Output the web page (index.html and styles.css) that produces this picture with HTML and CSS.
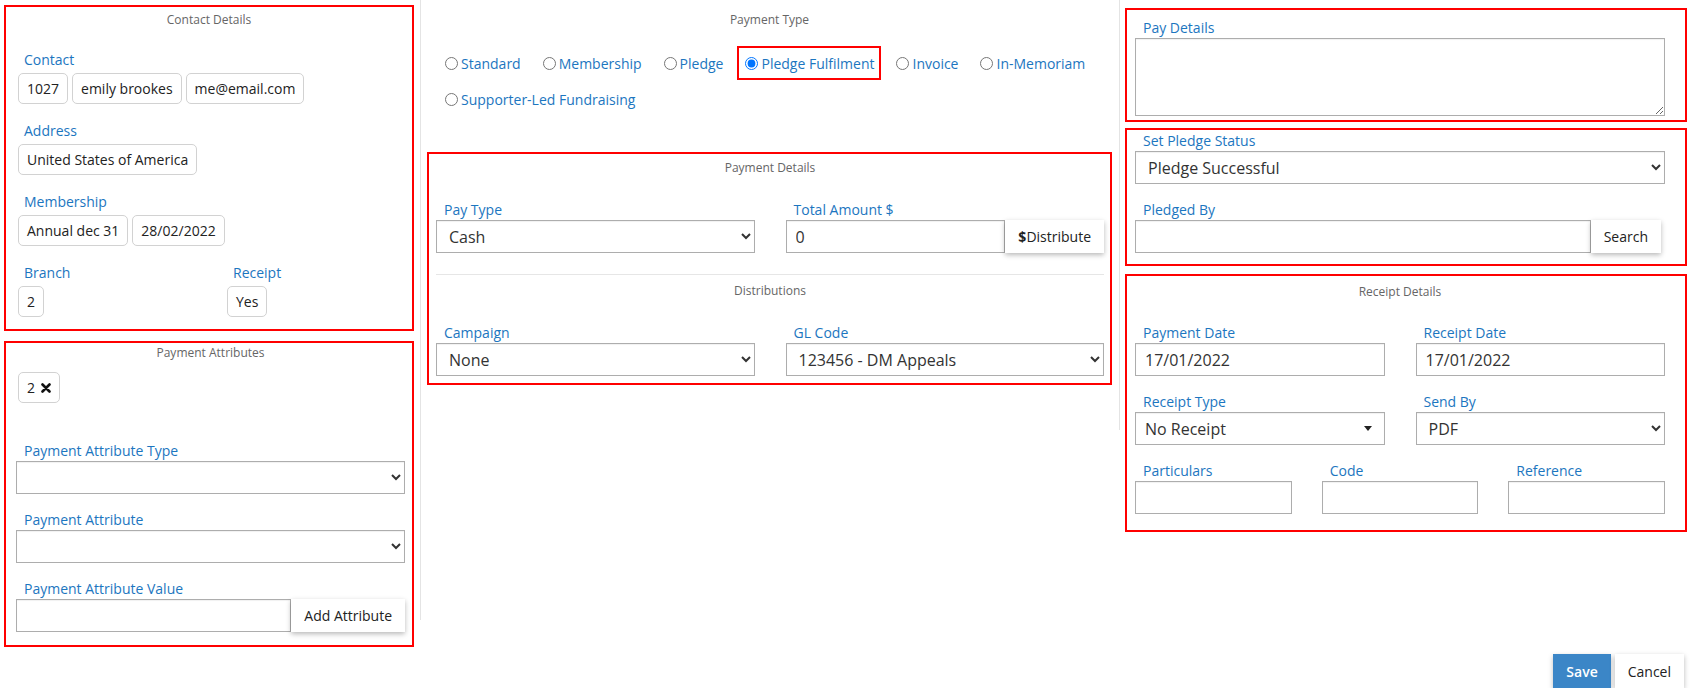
FILE: index.html
```html
<!DOCTYPE html>
<html lang="en">
<head>
  <meta charset="UTF-8">
  <meta name="viewport" content="width=device-width, initial-scale=1.0">
  <title>Payment</title>
  <link rel="stylesheet" href="styles.css">
</head>
<body>
  <div class="page">
    <div class="col col-left">
      <section class="box contact-box">
        <div class="box-title">Contact Details</div>
        <div class="field">
          <span class="lbl">Contact</span>
          <div class="chips">
            <span class="chip">1027</span>
            <span class="chip">emily brookes</span>
            <span class="chip">me@email.com</span>
          </div>
        </div>
        <div class="field">
          <span class="lbl">Address</span>
          <div class="chips">
            <span class="chip">United States of America</span>
          </div>
        </div>
        <div class="field">
          <span class="lbl">Membership</span>
          <div class="chips">
            <span class="chip">Annual dec 31</span>
            <span class="chip">28/02/2022</span>
          </div>
        </div>
        <div class="field field-pair">
          <div>
            <span class="lbl">Branch</span>
            <div class="chips"><span class="chip">2</span></div>
          </div>
          <div>
            <span class="lbl">Receipt</span>
            <div class="chips"><span class="chip">Yes</span></div>
          </div>
        </div>
      </section>

      <section class="box attr-box">
        <div class="box-title">Payment Attributes</div>
        <div class="chips tags">
          <span class="chip">2
            <svg class="remove" width="10" height="10" viewBox="0 0 10 10">
              <path d="M1.5 1.5 L8.5 8.5 M8.5 1.5 L1.5 8.5" stroke="#111" stroke-width="2.6" stroke-linecap="round"/>
            </svg>
          </span>
        </div>
        <div class="field">
          <span class="lbl">Payment Attribute Type</span>
          <select class="control"><option></option></select>
        </div>
        <div class="field">
          <span class="lbl">Payment Attribute</span>
          <select class="control"><option></option></select>
        </div>
        <div class="field">
          <span class="lbl">Payment Attribute Value</span>
          <div class="input-group">
            <input class="control" type="text">
            <button class="btn-raised">Add Attribute</button>
          </div>
        </div>
      </section>
    </div>

    <div class="col col-mid">
      <div class="box-title">Payment Type</div>
      <div class="radio-group">
        <label class="radio"><input type="radio" name="ptype">Standard</label>
        <label class="radio"><input type="radio" name="ptype">Membership</label>
        <label class="radio"><input type="radio" name="ptype">Pledge</label>
        <label class="radio selected"><input type="radio" name="ptype" checked>Pledge Fulfilment</label>
        <label class="radio"><input type="radio" name="ptype">Invoice</label>
        <label class="radio"><input type="radio" name="ptype">In-Memoriam</label>
        <label class="radio"><input type="radio" name="ptype">Supporter-Led Fundraising</label>
      </div>

      <section class="box details-box">
        <div class="box-title">Payment Details</div>
        <div class="grid-2">
          <div>
            <span class="lbl">Pay Type</span>
            <select class="control"><option>Cash</option></select>
          </div>
          <div>
            <span class="lbl">Total Amount $</span>
            <div class="input-group">
              <input class="control" type="text" value="0">
              <button class="btn-raised"><b>$</b>Distribute</button>
            </div>
          </div>
        </div>
        <hr>
        <div class="box-title">Distributions</div>
        <div class="grid-2">
          <div>
            <span class="lbl">Campaign</span>
            <select class="control"><option>None</option></select>
          </div>
          <div>
            <span class="lbl">GL Code</span>
            <select class="control"><option>123456 - DM Appeals</option></select>
          </div>
        </div>
      </section>
    </div>

    <div class="col col-right">
      <section class="box side-box paydetails-box">
        <span class="lbl">Pay Details</span>
        <textarea class="control notes"></textarea>
      </section>

      <section class="box side-box pledge-box">
        <span class="lbl">Set Pledge Status</span>
        <select class="control"><option>Pledge Successful</option></select>
        <div class="field">
          <span class="lbl">Pledged By</span>
          <div class="input-group pledged">
            <input class="control" type="text">
            <button class="btn-raised">Search</button>
          </div>
        </div>
      </section>

      <section class="box side-box receipt-box">
        <div class="box-title">Receipt Details</div>
        <div class="grid-2 first">
          <div>
            <span class="lbl">Payment Date</span>
            <input class="control" type="text" value="17/01/2022">
          </div>
          <div>
            <span class="lbl">Receipt Date</span>
            <input class="control" type="text" value="17/01/2022">
          </div>
        </div>
        <div class="grid-2 field">
          <div>
            <span class="lbl">Receipt Type</span>
            <button class="control picker">No Receipt<span class="caret"></span></button>
          </div>
          <div>
            <span class="lbl">Send By</span>
            <select class="control"><option>PDF</option></select>
          </div>
        </div>
        <div class="grid-3 field">
          <div>
            <span class="lbl">Particulars</span>
            <input class="control" type="text">
          </div>
          <div>
            <span class="lbl">Code</span>
            <input class="control" type="text">
          </div>
          <div>
            <span class="lbl">Reference</span>
            <input class="control" type="text">
          </div>
        </div>
      </section>
    </div>
  </div>

  <div class="actions">
    <button class="btn-save">Save</button>
    <button class="btn-raised btn-cancel">Cancel</button>
  </div>
</body>
</html>
```

FILE: styles.css
```css
* {
  margin: 0;
  padding: 0;
  box-sizing: border-box;
}

body {
  font-family: 'Open Sans', 'Noto Sans', sans-serif;
  font-size: 14px;
  color: #333;
  background: #fff;
}

.page {
  display: grid;
  grid-template-columns: 417px 698px 568px;
  align-items: start;
  padding-left: 4px;
}

/* columns */
.col-left {
  padding: 5px 7px 0 0;
  background: linear-gradient(#e4e4e4, #e4e4e4) right top / 1px 620px no-repeat;
}

.col-mid {
  padding: 12px 7px 0 6px;
}

.col-right {
  padding: 8px 0 0 6px;
  background: linear-gradient(#e4e4e4, #e4e4e4) left top / 1px 430px no-repeat;
}

/* boxes */
.box {
  border: 2px solid #ff0000;
}

.box-title {
  font-size: 12px;
  line-height: 16px;
  color: #666;
  text-align: center;
}

.lbl {
  display: block;
  font-size: 14px;
  line-height: 20px;
  color: #1c76c0;
  padding-left: 8px;
}

.chips {
  display: flex;
  gap: 4px;
}

.chip {
  display: inline-flex;
  align-items: center;
  height: 31px;
  padding: 0 8px;
  border: 1px solid #d2d2d2;
  border-radius: 5px;
  font-size: 14px;
  color: #222;
}

.chip .remove {
  margin-left: 6px;
}

.control {
  display: block;
  width: 100%;
  height: 33px;
  padding: 0 9px;
  font-family: inherit;
  font-size: 16px;
  color: #333;
  background: #fff;
  border: 1px solid #adadad;
  border-radius: 0;
  box-shadow: inset 0 1px 1px rgba(0, 0, 0, 0.06);
  outline: none;
}

select.control {
  padding-left: 8px;
}

.input-group {
  display: flex;
}

.input-group .control {
  flex: 1;
  min-width: 0;
}

.btn-raised {
  flex-shrink: 0;
  height: 33px;
  padding: 0 13px;
  font-family: inherit;
  font-size: 14px;
  color: #222;
  background: #fff;
  border: none;
  box-shadow: 0 2px 5px rgba(0, 0, 0, 0.28);
  cursor: pointer;
}

/* contact details */
.contact-box {
  padding: 5px 12px 12px;
}

.contact-box .box-title {
  margin-bottom: 22px;
}

.contact-box .lbl {
  padding-left: 6px;
  margin-bottom: 3px;
}

.contact-box .field + .field {
  margin-top: 17px;
}

.field-pair {
  display: grid;
  grid-template-columns: 1fr 1fr;
  column-gap: 36px;
}

/* payment attributes */
.attr-box {
  margin-top: 10px;
  padding: 2px 7px 13px 10px;
}

.tags {
  margin: 11px 0 0 2px;
}

.attr-box .field {
  margin-top: 16px;
}

.attr-box .tags + .field {
  margin-top: 38px;
}

/* payment type */
.radio-group {
  display: flex;
  flex-wrap: wrap;
  gap: 2px 7px;
  margin-top: 18px;
  padding-left: 10px;
}

.radio {
  display: inline-flex;
  align-items: center;
  height: 34px;
  padding: 0 5px 0 6px;
  border: 2px solid transparent;
  font-size: 14px;
  color: #1c76c0;
  cursor: pointer;
}

.radio input {
  width: 13px;
  height: 13px;
  margin: 0 3px 0 0;
}

.radio.selected {
  border-color: #ff0000;
}

/* payment details */
.details-box {
  margin-top: 36px;
  padding: 6px 6px 7px 7px;
}

.grid-2 {
  display: grid;
  grid-template-columns: 1fr 1fr;
  column-gap: 31px;
}

.grid-3 {
  display: grid;
  grid-template-columns: 1fr 1fr 1fr;
  column-gap: 30px;
}

.details-box .grid-2 {
  margin-top: 24px;
}

.details-box hr {
  border: none;
  border-top: 1px solid #e6e6e6;
  margin-top: 21px;
}

.details-box hr + .box-title {
  margin-top: 8px;
}

/* right column */
.side-box {
  padding-left: 8px;
  padding-right: 20px;
}

.paydetails-box {
  padding-top: 8px;
  padding-bottom: 4px;
}

.notes {
  height: 78px;
  resize: vertical;
}

.pledge-box {
  margin-top: 6px;
  padding-top: 1px;
  padding-bottom: 11px;
}

.pledge-box .field {
  margin-top: 16px;
}

.pledged {
  margin-right: 4px;
}

.receipt-box {
  margin-top: 8px;
  padding-top: 8px;
  padding-bottom: 16px;
}

.receipt-box .first {
  margin-top: 23px;
}

.receipt-box .field {
  margin-top: 16px;
}

.picker {
  display: flex;
  align-items: center;
  justify-content: space-between;
  padding: 0 12px 0 9px;
  text-align: left;
  cursor: pointer;
}

.caret {
  width: 0;
  height: 0;
  border-top: 5px solid #222;
  border-left: 4px solid transparent;
  border-right: 4px solid transparent;
}

/* footer buttons */
.actions {
  display: flex;
  justify-content: flex-end;
  gap: 4px;
  padding: 7px 10px 0 0;
}

.actions button {
  height: 34px;
}

.btn-save {
  padding: 0 13px;
  font-family: inherit;
  font-size: 14px;
  font-weight: 600;
  color: #fff;
  background: #3b86c7;
  border: none;
  box-shadow: 0 2px 5px rgba(0, 0, 0, 0.25);
  cursor: pointer;
}
```
